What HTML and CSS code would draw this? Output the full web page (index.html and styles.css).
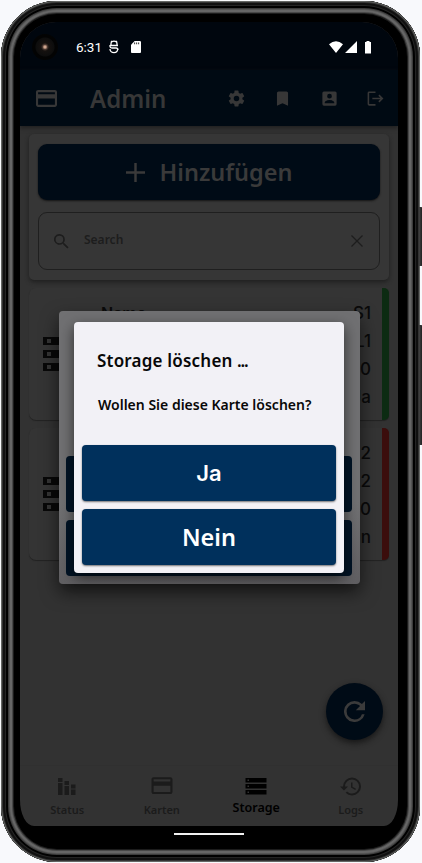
FILE: index.html
```html
<!DOCTYPE html>
<html lang="de">
<head>
<meta charset="utf-8">
<title>Admin</title>
<link rel="stylesheet" href="styles.css">
</head>
<body>
<div class="phone">
  <i class="side-key power"></i><i class="side-key volume"></i>
  <i class="camera"></i>
  <div class="screen">
    <div class="statusbar">
      <span class="clock">6:31</span>
      <svg class="st-debug" viewBox="0 0 10 14"><path d="M2 5V3.800C2 2 3.300 1.200 5 1.200S8 2 8 3.800V5M1 5.500h8M8.500 8.500C9 11 7.500 12.700 5 12.700S1 11 1 9M1 5v1.500Q1 8 3 8h4q2 0 2 2M2 1l1 1M8 1 7 2" fill="none" stroke="#fff" stroke-width="1.3"/></svg>
      <svg class="st-sd" viewBox="0 0 11 13"><path d="M4 0h5.500Q11 0 11 1v11q0 1-1 1H1q-1 0-1-1V4z" fill="#fff"/><path d="M4 1.500v2M6.200 1.500v2M8.400 1.500v2" stroke="#222"/></svg>
      <svg class="st-right" viewBox="0 0 43 13"><path d="M0 3.200Q7 -2.800 14 3.200L7 12z M28 0v12H16z M36 1h1.500V0h3v1H42v11.500h-6z" fill="#fff"/></svg>
    </div>
    <header class="appbar">
      <svg class="icon-card" viewBox="2 4 20 16"><path d="M20 4H4c-1.110 0-2 .89-2 2v12c0 1.110.89 2 2 2h16c1.110 0 2-.89 2-2V6c0-1.110-.89-2-2-2zm0 14H4v-6h16v6zm0-10H4V6h16z"/></svg>
      <h1><span>Admin</span></h1>
      <nav class="actions">
        <svg viewBox="0 0 24 24"><path fill-rule="evenodd" d="M12 15.500A3.500 3.500 0 0 1 8.500 12 3.500 3.500 0 0 1 12 8.500a3.500 3.500 0 0 1 3.500 3.500 3.500 3.500 0 0 1-3.500 3.500m7.430-2.530c.04-.32.07-.64.07-.97s-.03-.66-.07-1l2.110-1.630c.19-.15.24-.42.12-.64l-2-3.460c-.12-.22-.39-.31-.61-.22l-2.490 1c-.52-.39-1.060-.73-1.690-.98l-.37-2.650A.506.506 0 0 0 14 2h-4c-.25 0-.46.18-.5.42l-.37 2.650c-.63.25-1.170.59-1.690.98l-2.490-1c-.22-.09-.49 0-.61.22l-2 3.460c-.13.22-.07.49.12.64L4.570 11c-.04.34-.07.67-.07 1s.03.65.07.97l-2.110 1.660c-.19.15-.25.42-.12.64l2 3.460c.12.22.39.3.61.22l2.490-1.010c.52.4 1.060.74 1.690.99l.37 2.650c.04.24.25.42.5.42h4c.25 0 .46-.18.5-.42l.37-2.650c.63-.26 1.170-.59 1.690-.99l2.490 1.010c.22.08.49 0 .61-.22l2-3.460c.12-.22.07-.49-.12-.64z"/></svg>
        <svg viewBox="0 0 24 24"><path d="M17 3H7a2 2 0 0 0-2 2v16l7-3 7 3V5a2 2 0 0 0-2-2z"/></svg>
        <svg viewBox="0 0 24 24"><path d="M6 17c0-2 4-3.100 6-3.100s6 1.100 6 3.100v1H6m9-9a3 3 0 0 1-3 3 3 3 0 0 1-3-3 3 3 0 0 1 3-3 3 3 0 0 1 3 3M3 5v14a2 2 0 0 0 2 2h14a2 2 0 0 0 2-2V5a2 2 0 0 0-2-2H5a2 2 0 0 0-2 2z"/></svg>
        <svg viewBox="0 0 24 24"><path d="m17 7-1.410 1.410L18.170 11H8v2h10.170l-2.580 2.580L17 17l5-5M4 5h8V3H4c-1.100 0-2 .9-2 2v14c0 1.100.9 2 2 2h8v-2H4z"/></svg>
      </nav>
    </header>
    <main>
      <section class="panel">
        <button class="add"><svg viewBox="0 0 20 20"><path d="M8.700 0h2.600v8.700H20v2.600h-8.700V20H8.700v-8.700H0V8.700h8.700z"/></svg><span>Hinzufügen</span></button>
        <div class="search">
          <svg class="lens" viewBox="3 3 18 18"><path d="M9.500 3A6.500 6.500 0 0 1 16 9.500c0 1.610-.59 3.090-1.560 4.230l.27.27h.79l5 5-1.500 1.500-5-5v-.79l-.27-.27A6.500 6.500 0 1 1 9.500 3m0 2a4.500 4.500 0 1 0 0 9 4.500 4.500 0 0 0 0-9z"/></svg>
          <span>Search</span>
          <svg class="clear" viewBox="0 0 12 12"><path d="M.5.5l11 11M11.500.5l-11 11"/></svg>
        </div>
      </section>
      <section class="storage ok">
        <svg class="server" viewBox="0 0 40 34"><path fill-rule="evenodd" d="M0 0h40v8H0zM4 2v4h4V2zM0 13h40v8H0zM4 15v4h4v-4zM0 26h40v8H0zM4 28v4h4v-4z"/></svg>
        <div class="rows"><p><b>Name</b><span>S1</span></p><p><b></b><span>L1</span></p><p><b></b><span>0</span></p><p><b></b><span>Ja</span></p></div>
      </section>
      <section class="storage bad">
        <svg class="server" viewBox="0 0 40 34"><path fill-rule="evenodd" d="M0 0h40v8H0zM4 2v4h4V2zM0 13h40v8H0zM4 15v4h4v-4zM0 26h40v8H0zM4 28v4h4v-4z"/></svg>
        <div class="rows"><p><b></b><span>S2</span></p><p><b></b><span>L2</span></p><p><b></b><span>0</span></p><p><b></b><span>Nein</span></p></div>
      </section>
    </main>
    <nav class="tabs">
      <a><svg viewBox="0 0 22 22"><path d="M2 2h4.500v4H2zM2 7h4.500v12H2zM8.500 5H13v4H8.500zM8.500 10H13v9H8.500zM15 8.500h4.500v4H15zM15 13.500h4.500V19H15z"/></svg><span>Status</span></a>
      <a><svg viewBox="1.500 2.800 21 21"><path d="M20 4H4c-1.110 0-2 .89-2 2v12c0 1.110.89 2 2 2h16c1.110 0 2-.89 2-2V6c0-1.110-.89-2-2-2zm0 14H4v-6h16v6zm0-10H4V6h16z"/></svg><span>Karten</span></a>
      <a class="active"><svg viewBox="0 0 22 22"><path fill-rule="evenodd" d="M.5 2h21v4.500H.5zM2.500 3.500v1.500H4V3.500zM.5 8h21v4.500H.5zM2.500 9.500V11H4V9.500zM.5 14h21v4.500H.5zM2.500 15.500V17H4v-1.500z"/></svg><span>Storage</span></a>
      <a><svg viewBox="1 1.500 22 22"><path d="M13.500 8H12v5l4.280 2.540.72-1.210-3.500-2.080V8M13 3a9 9 0 0 0-9 9H1l3.960 4.030L9 12H6a7 7 0 0 1 7-7 7 7 0 0 1 7 7 7 7 0 0 1-7 7c-1.930 0-3.680-.79-4.940-2.060l-1.420 1.420A8.896 8.896 0 0 0 13 21a9 9 0 0 0 9-9 9 9 0 0 0-9-9"/></svg><span>Logs</span></a>
    </nav>
    <button class="fab"><svg viewBox="4 4 16 16"><path d="M17.650 6.350A7.958 7.958 0 0 0 12 4a8 8 0 1 0 7.730 10h-2.080A5.990 5.990 0 0 1 12 18a6 6 0 1 1 0-12c1.660 0 3.140.69 4.220 1.780L13 11h7V4z"/></svg></button>
    <div class="dialog back"><i class="bar"></i><i class="bar"></i></div>
    <div class="dialog front">
      <h2><span>Storage löschen</span> <span class="dots">...</span></h2>
      <p class="question"><span>Wollen Sie diese Karte löschen?</span></p>
      <button class="choice yes"><span>Ja</span></button>
      <button class="choice"><span>Nein</span></button>
    </div>
  </div>
  <i class="home"></i>
</div>
</body>
</html>
```
FILE: styles.css
```css
* { box-sizing: border-box; }
body { margin: 0; width: 422px; height: 863px; overflow: hidden; background: #f8f9fc; font-family: "Noto Sans", sans-serif; font-weight: 600; }
h1, h2, p { margin: 0; }
button { border: 0; padding: 0; font: inherit; }
svg { display: block; flex: none; fill: currentColor; }

.phone {
  position: relative; width: 419px; height: 861px; margin: 1px 0 0 1px; padding: 21px 22px 0 19px;
  border-radius: 56px; background: #000;
  box-shadow: inset 0 0 0 1px #656765, inset 0 0 0 2px #333, inset 0 0 0 4px #101010, inset 0 0 0 5px #242424, inset 0 0 0 7px #000, inset 0 0 0 8px #3c3c3c, inset 0 0 0 9px #545454, inset 0 0 0 11px #666, inset 0 0 0 12px #484848, inset 0 0 0 13px #1c1c1c;
}
.side-key { position: absolute; left: 418px; width: 4px; background: linear-gradient(90deg, #444, #161616); border-radius: 0 2px 2px 0; }
.power { top: 206px; height: 59px; }
.volume { top: 324px; height: 120px; }
.camera { position: absolute; z-index: 2; left: 31px; top: 33px; width: 26px; height: 26px; border-radius: 50%; background: radial-gradient(circle, #d0a58e 0 1px, #4a3830 2.500px, #15110f 4px, #0d0d0d 9px, #030303 10px); }
.home { position: absolute; left: 173px; top: 832px; width: 70px; height: 2px; background: #f0f0f0; }

.screen { position: relative; display: flex; flex-direction: column; width: 378px; height: 804px; overflow: hidden; border-radius: 36px 36px 14px 14px / 36px 36px 26px 26px; background: #323232; color: #373737; }
.statusbar { display: flex; align-items: center; height: 48px; padding: 2px 26px 0 56px; background: #00060e; color: #fff; }
.clock { width: 33px; font: 400 13.500px Roboto, sans-serif; }
.st-debug { width: 10px; height: 14px; }
.st-sd { width: 10px; height: 12px; margin-left: 12px; }
.st-right { width: 43px; height: 13px; margin-left: auto; }
.appbar { display: flex; align-items: center; height: 56px; padding: 0 13px 0 16px; background: #000a13; box-shadow: 0 2px 4px #202020; z-index: 1; }
.icon-card { width: 21px; height: 17px; }
h1 { width: 74px; margin-left: 33px; font-size: 25px; font-weight: 600; line-height: 55px; white-space: nowrap; }
h1 span, h2 span, .question span, .choice span, .add span { display: inline-block; }
h1 span { transform: scaleX(.96); transform-origin: 0 50%; }
.actions { display: flex; gap: 27.500px; margin-left: auto; }
.actions svg { width: 19px; height: 19px; }

main { display: flex; flex-direction: column; gap: 8px; padding: 8px 9px; flex: 1; }
.panel { height: 146px; padding: 10px 9px; border-radius: 5px; background: #363636; box-shadow: 0 2px 4px #1f1f1f; }
.add { display: flex; align-items: center; justify-content: center; gap: 15px; width: 342px; height: 56px; border-radius: 9px; color: #3a3a3a; background: #000b16; font-size: 23.500px; font-weight: 600; box-shadow: 0 1px 2px #151515; }
.add svg { width: 19px; height: 19px; }
.search { display: flex; align-items: center; height: 58px; margin-top: 12px; padding: 0 16px 0 15px; border: 1px solid #1f1f1f; border-radius: 9px; color: #1d1d1d; font-size: 12px; }
.search span { margin: -3px auto 0 15px; }
.lens { width: 15px; height: 15px; }
.clear { width: 12px; height: 12px; stroke: currentColor; stroke-width: 1.300; }
.storage { display: flex; height: 132px; padding: 11px 11px 0 14px; border-right: 7px solid; border-radius: 7px 5px 5px 7px; background: #343434; box-shadow: 0 1px 1px #222; }
.ok { border-right-color: #0c2b12; }
.bad { border-right-color: #3b0d0c; }
.server { width: 40px; height: 34px; margin-top: 38px; color: #080808; }
.rows { flex: 1; margin-left: 18px; color: #0a0a0a; font: 500 17px Inter, sans-serif; }
.rows p { display: flex; justify-content: space-between; height: 28px; line-height: 29px; }
.rows b { font-size: 16px; font-weight: 600; }
.tabs { display: grid; grid-template-columns: repeat(4, 1fr); height: 61px; border-top: 1px solid #303030; color: #1b1b1b; font-size: 11px; }
.tabs a { display: flex; flex-direction: column; align-items: center; padding-top: 10px; line-height: 14px; }
.tabs svg { width: 22px; height: 22px; }
.tabs span { margin-top: 5px; }
.tabs .active { color: #000; font-size: 12.500px; }
.tabs .active span { margin-top: 3px; }

.fab { position: absolute; left: 306px; top: 661px; display: grid; place-items: center; width: 57px; height: 57px; border-radius: 50%; background: #000b16; color: #3b3b3b; box-shadow: 0 3px 6px #171717; }
.fab svg { width: 21px; height: 21px; }
.dialog { position: absolute; display: flex; flex-direction: column; border-radius: 4px; }
.back { left: 38.500px; top: 289px; width: 301px; height: 273px; padding: 145px 7.500px 0; gap: 8px; background: linear-gradient(#707072 70%, #605f62); box-shadow: 0 8px 18px #0009; }
.bar { flex: none; height: 56px; border-radius: 4px; background: #001325; }
.front { left: 54px; top: 300px; width: 270px; height: 251px; padding: 24px 8px 8px; background: #f2f1f6; color: #080808; box-shadow: 0 5px 14px #0009; }
h2 { height: 30px; padding-left: 15px; font-size: 17px; font-weight: 600; line-height: 30px; white-space: nowrap; }
.dots { letter-spacing: -1.200px; }
.question { height: 69px; padding-left: 16px; font-size: 14px; line-height: 57px; white-space: nowrap; }
h2 span, .question span { transform-origin: 0 50%; }
h2 span:first-child { letter-spacing: .2px; }
.choice { flex: none; height: 56px; border-radius: 4px; background: #00305c; color: #fff; font-size: 23.500px; font-weight: 600; box-shadow: 0 1px 2px #0008; }
.choice + .choice { margin-top: 8px; }
.yes { font-family: Inter, sans-serif; font-size: 22px; }
```
